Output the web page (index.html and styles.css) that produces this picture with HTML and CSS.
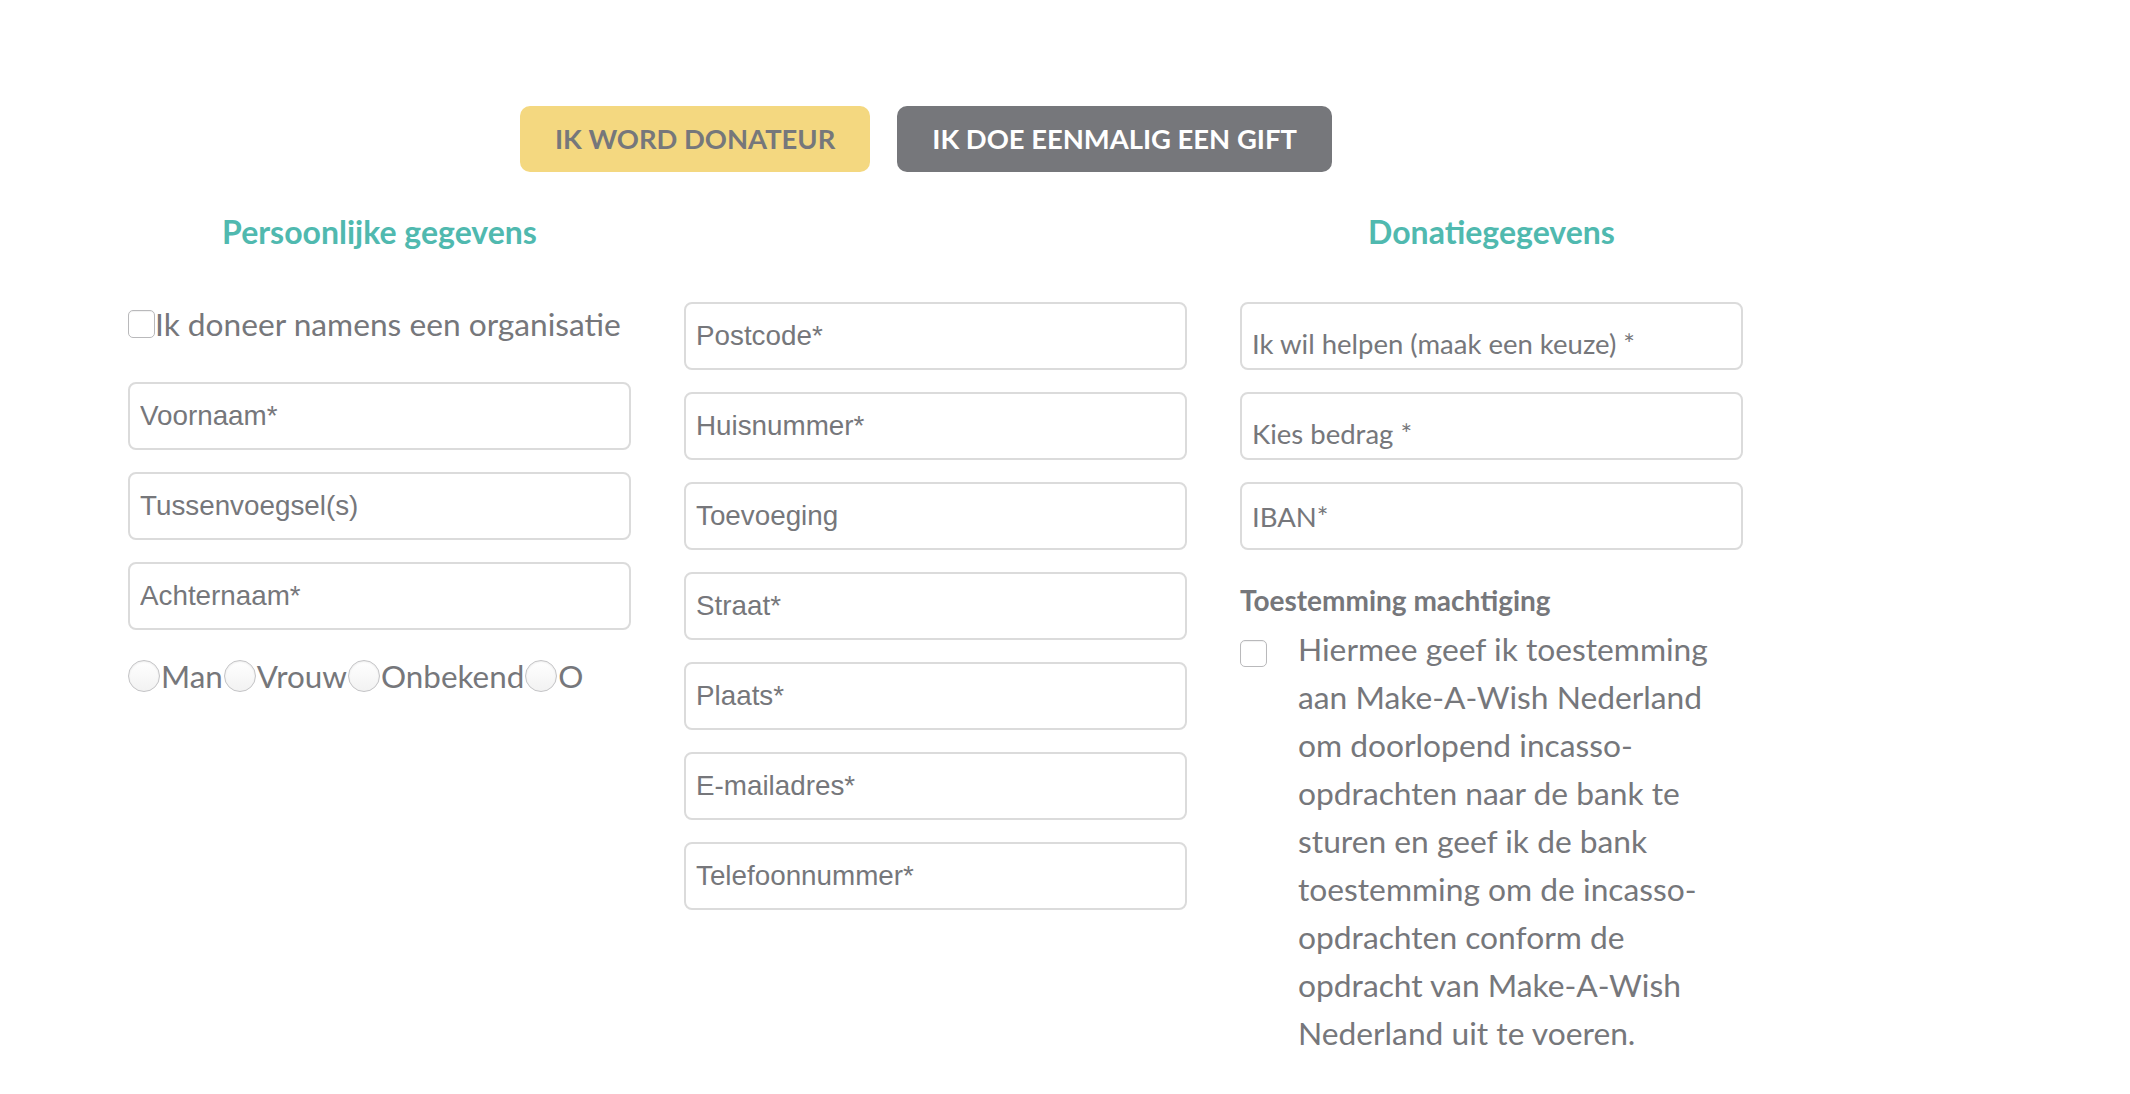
FILE: index.html
```html
<!DOCTYPE html>
<html lang="nl">
<head>
<meta charset="utf-8">
<title>Doneren</title>
<link rel="stylesheet" href="styles.css">
</head>
<body>
<div class="page">
  <div class="tabs">
    <button class="tab tab-active" type="button">IK WORD DONATEUR</button>
    <button class="tab tab-dark" type="button">IK DOE EENMALIG EEN GIFT</button>
  </div>
  <form class="form">
    <h2 class="section-title">Persoonlijke gegevens</h2>
    <div class="title-spacer"></div>
    <h2 class="section-title">Donatiegegevens</h2>

    <div class="col">
      <label class="check-row">
        <input class="check" type="checkbox">Ik doneer namens een organisatie
      </label>
      <input class="field" type="text" placeholder="Voornaam*">
      <input class="field" type="text" placeholder="Tussenvoegsel(s)">
      <input class="field" type="text" placeholder="Achternaam*">
      <div class="radio-row">
        <input class="radio" type="radio" name="g" id="g1"><label for="g1">Man</label><input class="radio" type="radio" name="g" id="g2"><label for="g2">Vrouw</label><input class="radio" type="radio" name="g" id="g3"><label for="g3">Onbekend</label><input class="radio" type="radio" name="g" id="g4"><label for="g4">O</label>
      </div>
    </div>

    <div class="col">
      <input class="field" type="text" placeholder="Postcode*">
      <input class="field" type="text" placeholder="Huisnummer*">
      <input class="field" type="text" placeholder="Toevoeging">
      <input class="field" type="text" placeholder="Straat*">
      <input class="field" type="text" placeholder="Plaats*">
      <input class="field" type="email" placeholder="E-mailadres*">
      <input class="field" type="tel" placeholder="Telefoonnummer*">
    </div>

    <div class="col">
      <select class="field field-select"><option>Ik wil helpen (maak een keuze) *</option></select>
      <select class="field field-select"><option>Kies bedrag *</option></select>
      <input class="field field-lato" type="text" placeholder="IBAN*">
      <h3 class="sub-title">Toestemming machtiging</h3>
      <label class="consent">
        <input class="check check-consent" type="checkbox">
        <span class="consent-text">Hiermee geef ik toestemming aan Make-A-Wish Nederland om doorlopend incasso-opdrachten naar de bank te sturen en geef ik de bank toestemming om de incasso-opdrachten conform de opdracht van Make-A-Wish Nederland uit te voeren.</span>
      </label>
    </div>
  </form>
</div>
</body>
</html>
```
FILE: styles.css
```css
* { box-sizing: border-box; }

html, body {
  margin: 0;
  padding: 0;
  background: #ffffff;
}

body {
  font-family: Lato, "Noto Sans", sans-serif;
  color: #76777b;
}

.page {
  padding: 106px 0 0 128px;
}

.tabs {
  display: flex;
  gap: 27px;
  padding-left: 392px;
}

.tab {
  height: 66px;
  padding: 0 35px;
  border: 0;
  border-radius: 10px;
  font-family: Lato, sans-serif;
  font-weight: 700;
  font-size: 27.4px;
  line-height: 1;
  cursor: pointer;
}

.tab-active {
  background: #f4d880;
  color: #76777b;
}

.tab-dark {
  background: #76777b;
  color: #ffffff;
}

.form {
  display: grid;
  grid-template-columns: 503px 503px 503px;
  column-gap: 53px;
  margin-top: 38px;
}

.section-title {
  margin: 3px 0 51px;
  text-align: center;
  font-size: 32px;
  line-height: 38px;
  font-weight: 700;
  color: #50b9af;
}

.title-spacer { height: 38px; margin: 3px 0 51px; }

.col {
  display: flex;
  flex-direction: column;
}

.check-row {
  display: flex;
  align-items: center;
  height: 40px;
  margin: 2px 0 38px;
  font-size: 31.7px;
  line-height: 40px;
}

.check {
  -webkit-appearance: none;
  appearance: none;
  width: 27px;
  height: 28px;
  margin: 0;
  flex: none;
  border: 1px solid #b9b9bb;
  border-radius: 5px;
  background: #fff;
  box-shadow: inset 0 1px 1px rgba(0,0,0,0.06);
}

.field {
  display: block;
  width: 100%;
  height: 68px;
  margin: 0 0 22px;
  padding: 0 10px;
  border: 2px solid #dbdbdb;
  border-radius: 8px;
  background: #fff;
  font-family: "Liberation Sans", Arial, sans-serif;
  font-size: 27.8px;
  color: #76777b;
  outline: none;
}

.field::placeholder {
  color: #76777b;
  opacity: 1;
}

.field-lato {
  font-family: Lato, sans-serif;
  font-size: 27.5px;
}

.field-select {
  -webkit-appearance: none;
  appearance: none;
  font-family: Lato, sans-serif;
  font-size: 27.5px;
  padding-top: 14px;
}

.radio-row {
  display: flex;
  align-items: center;
  height: 40px;
  margin-top: 4px;
  font-size: 31.4px;
  line-height: 40px;
}

.radio {
  -webkit-appearance: none;
  appearance: none;
  width: 32px;
  height: 32px;
  margin: 0 1px;
  flex: none;
  border: 1px solid #c4c4c6;
  border-radius: 50%;
  background: linear-gradient(#ffffff, #f2f2f2);
  box-shadow: inset 0 1px 2px rgba(0,0,0,0.08);
}

.radio:first-child { margin-left: 0; }

.sub-title {
  margin: 12px 0 9px;
  font-size: 28px;
  line-height: 32px;
  font-weight: 700;
}

.consent {
  display: flex;
  align-items: flex-start;
  gap: 31px;
}

.check-consent {
  margin-top: 15px;
  width: 27px;
  height: 27px;
}

.consent-text {
  width: 444px;
  font-size: 31.75px;
  line-height: 48px;
}
```
